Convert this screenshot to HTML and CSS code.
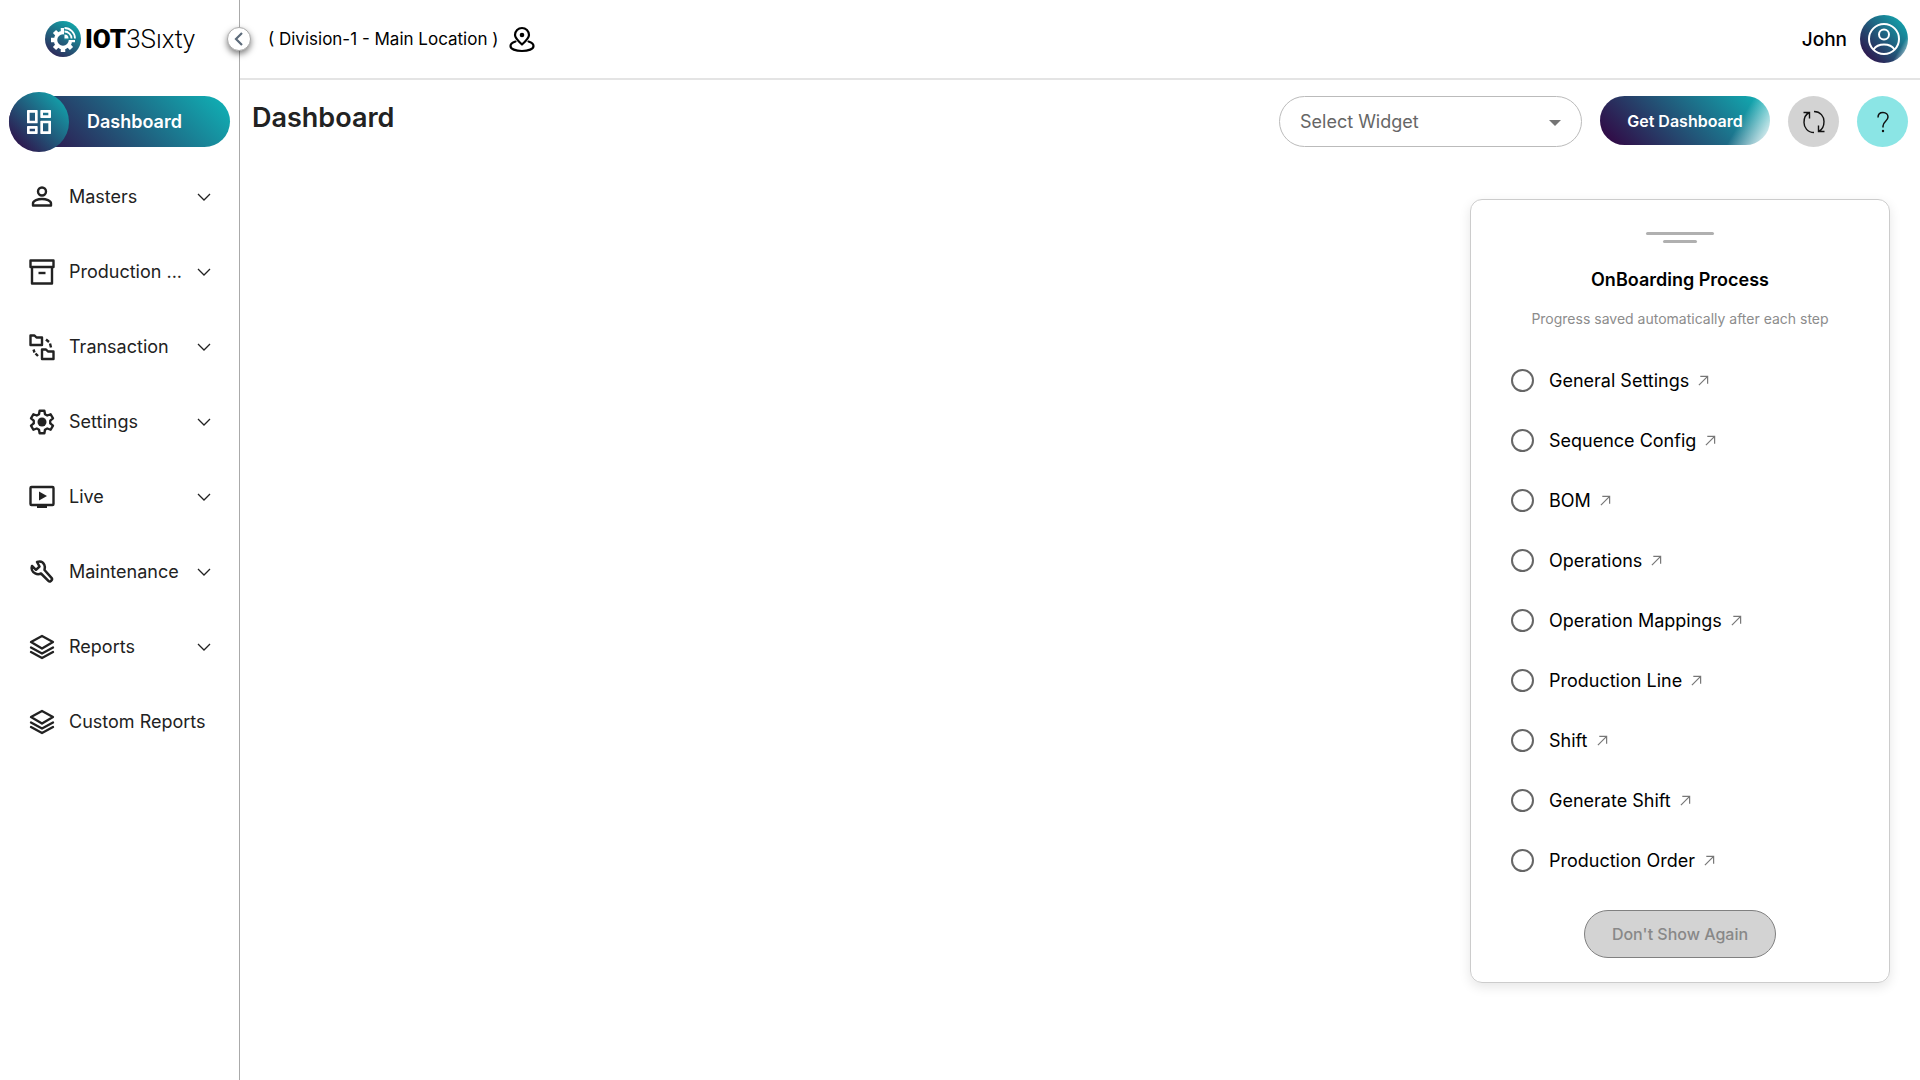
FILE: index.html
```html
<!DOCTYPE html>
<html lang="en">
<head>
    <meta charset="UTF-8">
    <meta name="viewport" content="width=device-width, initial-scale=1.0">
    <title>IOT3Sixty - Dashboard</title>
    <link rel="stylesheet" href="styles.css">
</head>
<body>
    <!-- Shared icons -->
    <svg class="sprite" aria-hidden="true">
        <symbol id="chevron" viewBox="0 0 14 14"><path d="M1 4l6 6 6-6" fill="none" stroke="#222" stroke-width="1.3"/></symbol>
        <symbol id="arrow" viewBox="0 0 12 12"><path d="M1 11L10.500 1.500M2.500 1.500h8v8" fill="none" stroke="#777" stroke-width="1.300"/></symbol>
        <symbol id="layers" viewBox="0 0 30 30"><g fill="none" stroke="#222" stroke-width="2.300" stroke-linejoin="round" stroke-linecap="round"><path d="M15 4l11 6-11 6.500L4 10z"/><path d="M4 15.500L15 21.500l11-6M4 20L15 26l11-6"/></g></symbol>
    </svg>

    <!-- Sidebar -->
    <aside class="sidebar">
        <div class="logo">
            <svg width="36" height="36" viewBox="0 0 36 36">
                <defs><linearGradient id="logoBg" x1="0" y1="1" x2="0.6" y2="0"><stop offset="0" stop-color="#33174f"/><stop offset="1" stop-color="#14a0a5"/></linearGradient></defs>
                <circle cx="18" cy="18" r="18" fill="url(#logoBg)"/>
                <circle cx="18" cy="19" r="7.500" fill="none" stroke="#fff" stroke-width="3.500"/>
                <g stroke="#fff" stroke-width="4.500">
                    <path d="M18 11V7M18 27v4M10 19H6M26 19h4M12.300 13.300L9.500 10.500M12.300 24.700L9.500 27.500M23.700 24.700L26.500 27.500"/>
                </g>
                <path d="M19 19V5a13 13 0 0 1 12 14z" fill="#1b8291"/>
                <path d="M19.500 17.500v-4a4 4 0 0 1 4 4z" fill="#fff"/>
                <path d="M19.500 10.500a7 7 0 0 1 7 7M19.500 7a10.500 10.500 0 0 1 10.500 10.500" fill="none" stroke="#fff" stroke-width="1.800"/>
            </svg>
            <span class="logo-text"><b>IOT</b>3Sıxty</span>
        </div>
        <button class="collapse" aria-label="Collapse menu">
            <svg width="12" height="14" viewBox="0 0 12 14"><path d="M9 1L3 7l6 6" fill="none" stroke="#5c6b7a" stroke-width="2.200"/></svg>
        </button>

        <nav>
            <a href="#" class="item active">
                <span class="pill">
                    <span class="bubble">
                        <svg width="32" height="32" viewBox="0 0 24 24" fill="#fff"><path fill-rule="evenodd" d="M3.500 3h7a.5.5 0 0 1 .5.5v9a.5.5 0 0 1-.5.5h-7a.5.5 0 0 1-.5-.5v-9a.5.5 0 0 1 .5-.5zM5 5v6h4V5zM13.500 3h7a.5.5 0 0 1 .5.5v5a.5.5 0 0 1-.5.5h-7a.5.5 0 0 1-.5-.5v-5a.5.5 0 0 1 .5-.5zM15 5v2h4V5zM13.500 11h7a.5.5 0 0 1 .5.5v9a.5.5 0 0 1-.5.5h-7a.5.5 0 0 1-.5-.5v-9a.5.5 0 0 1 .5-.5zM15 13v6h4v-6zM3.500 15h7a.5.5 0 0 1 .5.5v5a.5.5 0 0 1-.5.5h-7a.5.5 0 0 1-.5-.5v-5a.5.5 0 0 1 .5-.5zM5 17v2h4v-2z"/></svg>
                    </span>
                    <span>Dashboard</span>
                </span>
            </a>
            <a href="#" class="item">
                <svg class="icon" viewBox="0 0 30 30"><g fill="none" stroke="#222" stroke-width="2.400" stroke-linejoin="round"><circle cx="15" cy="9.500" r="4"/><path d="M6 23.500v-2c0-3 5-4.500 9-4.500s9 1.500 9 4.500v2z"/></g></svg>
                <span class="label">Masters</span>
                <svg class="chev"><use href="#chevron"/></svg>
            </a>
            <a href="#" class="item">
                <svg class="icon" viewBox="0 0 30 30"><g fill="none" stroke="#222" stroke-width="2.400" stroke-linejoin="round"><path d="M3.500 3.500h23v6.500h-23zM5 10v16.500h20V10"/><path d="M11.500 16h7"/></g></svg>
                <span class="label">Production ...</span>
                <svg class="chev"><use href="#chevron"/></svg>
            </a>
            <a href="#" class="item">
                <svg class="icon" viewBox="0 0 30 30"><g fill="none" stroke="#222" stroke-width="2.400" stroke-linejoin="round"><path d="M3.500 3.500h4l2 2H15v7.500H3.500zM15 17.500h4l2 2h5.500v7.500H15z"/><path d="M19 7.500l3 2.500M23 11.500l1 4M6.500 17.500l1 3M8.500 21.500l2.500 2.500"/></g></svg>
                <span class="label">Transaction</span>
                <svg class="chev"><use href="#chevron"/></svg>
            </a>
            <a href="#" class="item">
                <svg class="icon" viewBox="0 0 24 24"><path fill="none" stroke="#222" stroke-width="1.900" stroke-linejoin="round" d="M10.100 3h3.800l.5 2.800 1.800 1 2.700-1 1.900 3.300-2.200 1.800v2.200l2.200 1.800-1.900 3.300-2.700-1-1.800 1-.5 2.800h-3.800l-.5-2.800-1.800-1-2.700 1-1.900-3.300 2.200-1.800v-2.200L3.200 9.100l1.900-3.300 2.700 1 1.800-1z"/><circle cx="12" cy="12" r="3.600" fill="#222"/></svg>
                <span class="label">Settings</span>
                <svg class="chev"><use href="#chevron"/></svg>
            </a>
            <a href="#" class="item">
                <svg class="icon" viewBox="0 0 30 30"><rect x="3.500" y="5" width="23" height="18" rx="1" fill="none" stroke="#222" stroke-width="2.400"/><path d="M10 23h10v3H10zM12 9.500l8 4.500-8 4.500z" fill="#222"/></svg>
                <span class="label">Live</span>
                <svg class="chev"><use href="#chevron"/></svg>
            </a>
            <a href="#" class="item">
                <svg class="icon" viewBox="0 0 30 30"><path fill="none" stroke="#222" stroke-width="2.500" stroke-linejoin="round" d="M10 5c3-1 6 0 7.300 2.700 1 2 .7 3.800.2 5.300l7 7.800c.8 1 .8 1.700 0 2.500l-.7.7c-.8.700-1.700.6-2.400-.1L14 16.500c-1.700.8-3.800 1-5.800-.1C5 14.800 4 11.500 5 9l4 3.800 3.500-3.300z"/></svg>
                <span class="label">Maintenance</span>
                <svg class="chev"><use href="#chevron"/></svg>
            </a>
            <a href="#" class="item">
                <svg class="icon"><use href="#layers"/></svg>
                <span class="label">Reports</span>
                <svg class="chev"><use href="#chevron"/></svg>
            </a>
            <a href="#" class="item">
                <svg class="icon"><use href="#layers"/></svg>
                <span class="label">Custom Reports</span>
            </a>
        </nav>
    </aside>

    <div class="page">
        <header>
            <span class="location">( Division-1 - Main Location )</span>
            <svg width="28" height="28" viewBox="0 0 28 28"><g fill="none" stroke="#000" stroke-width="2.200" stroke-linejoin="round" stroke-linecap="round"><path d="M14 19.500C9.500 15.500 7 13 7 10a7 7 0 0 1 14 0c0 3-2.500 5.500-7 9.500z"/><path d="M7.500 16.500C4 17.500 2.500 19 2.500 21c0 3 5 5 11.500 5s11.500-2 11.500-5c0-2-1.500-3.500-5-4.500"/></g><circle cx="14" cy="10" r="2.300"/></svg>
            <div class="user">
                <span>John</span>
                <button class="avatar" aria-label="Account">
                    <svg width="34" height="34" viewBox="0 0 34 34"><g fill="none" stroke="#fff" stroke-width="2"><circle cx="17" cy="17" r="15"/><circle cx="17" cy="12.500" r="5"/><path d="M6.500 27.500c2-3 6-5 10.500-5s8.500 2 10.500 5"/></g></svg>
                </button>
            </div>
        </header>

        <main>
            <div class="toolbar">
                <h1>Dashboard</h1>
                <div class="select">
                    <select aria-label="Select Widget">
                        <option>Select Widget</option>
                    </select>
                    <svg width="12" height="6" viewBox="0 0 12 6"><path d="M0 0h12L6 6z" fill="#757575"/></svg>
                </div>
                <button class="get">Get Dashboard</button>
                <button class="round refresh" aria-label="Refresh">
                    <svg width="26" height="26" viewBox="0 0 26 26" fill="none" stroke="#111" stroke-width="1.400"><path d="M13 23.500C6.500 23.500 3 18.500 3 13.500 3 9 5 5 8.500 3.500M2.500 3.500h6v6M13 2.500C19.500 2.500 23 7.500 23 12.500c0 4.500-2 8.500-5.500 10M23.500 22.500h-6v-6"/></svg>
                </button>
                <button class="round help" aria-label="Help">
                    <svg width="14" height="22" viewBox="0 0 14 22"><path d="M2 6.500C2 3.500 4 1.500 7 1.500s5 2 5 4.500c0 4-5 4.500-5 9v1.500" fill="none" stroke="#111" stroke-width="1.500"/><circle cx="7" cy="20" r="1.200" fill="#111"/></svg>
                </button>
            </div>

            <!-- Onboarding card -->
            <section class="card">
                <div class="handle"></div>
                <div class="handle short"></div>
                <h2>OnBoarding Process</h2>
                <p>Progress saved automatically after each step</p>
                <ul>
                    <li><label><input type="checkbox">General Settings</label><a href="#" aria-label="Open General Settings"><svg><use href="#arrow"/></svg></a></li>
                    <li><label><input type="checkbox">Sequence Config</label><a href="#" aria-label="Open Sequence Config"><svg><use href="#arrow"/></svg></a></li>
                    <li><label><input type="checkbox">BOM</label><a href="#" aria-label="Open BOM"><svg><use href="#arrow"/></svg></a></li>
                    <li><label><input type="checkbox">Operations</label><a href="#" aria-label="Open Operations"><svg><use href="#arrow"/></svg></a></li>
                    <li><label><input type="checkbox">Operation Mappings</label><a href="#" aria-label="Open Operation Mappings"><svg><use href="#arrow"/></svg></a></li>
                    <li><label><input type="checkbox">Production Line</label><a href="#" aria-label="Open Production Line"><svg><use href="#arrow"/></svg></a></li>
                    <li><label><input type="checkbox">Shift</label><a href="#" aria-label="Open Shift"><svg><use href="#arrow"/></svg></a></li>
                    <li><label><input type="checkbox">Generate Shift</label><a href="#" aria-label="Open Generate Shift"><svg><use href="#arrow"/></svg></a></li>
                    <li><label><input type="checkbox">Production Order</label><a href="#" aria-label="Open Production Order"><svg><use href="#arrow"/></svg></a></li>
                </ul>
                <button class="dismiss" disabled>Don't Show Again</button>
            </section>
        </main>
    </div>
</body>
</html>
```

FILE: styles.css
```css
* {
    box-sizing: border-box;
}

body {
    display: flex;
    min-height: 100vh;
    margin: 0;
    font-family: Inter, "Liberation Sans", sans-serif;
    font-size: 18px;
    color: #222;
    background: #fff;
}

button, select {
    font-family: inherit;
    cursor: pointer;
}

.sprite {
    display: none;
}

/* Sidebar */
.sidebar {
    position: relative;
    flex: none;
    width: 240px;
    border-right: 1px solid #aaa;
}

.logo {
    display: flex;
    align-items: center;
    gap: 4px;
    height: 84px;
    padding: 0 0 6px 45px;
}

.logo-text {
    font-family: Roboto, sans-serif;
    font-size: 26px;
    font-weight: 300;
    color: #000;
}

.logo-text b {
    font-weight: 900;
}

.collapse {
    position: absolute;
    top: 27px;
    right: -12px;
    display: flex;
    align-items: center;
    justify-content: center;
    width: 24px;
    height: 24px;
    padding: 0;
    border: 1px solid #aaa;
    border-radius: 50%;
    background: #fff;
    box-shadow: 0 3px 6px rgba(0, 0, 0, 0.5);
}

.item {
    display: flex;
    align-items: center;
    height: 75px;
    padding: 0 28px 0 27px;
    color: #222;
    text-decoration: none;
}

.icon {
    flex: none;
    width: 30px;
    height: 30px;
    margin-right: 12px;
}

.label {
    white-space: nowrap;
}

.chev {
    flex: none;
    width: 14px;
    height: 14px;
    margin-left: auto;
}

.item.active {
    padding: 0 9px;
    color: #fff;
    font-weight: 600;
}

.pill {
    display: flex;
    flex: 1;
    align-items: center;
    gap: 18px;
    height: 51px;
    border-radius: 26px;
    background: linear-gradient(45deg, #33003f, #0fb5b8);
}

.bubble {
    display: flex;
    align-items: center;
    justify-content: center;
    width: 60px;
    height: 60px;
    border-radius: 50%;
    background: linear-gradient(45deg, #33003f, #0fb5b8);
}

/* Top bar */
.page {
    flex: 1;
    min-width: 0;
}

header {
    display: flex;
    align-items: center;
    gap: 10px;
    height: 80px;
    padding: 0 12px 0 28px;
    border-bottom: 2px solid #e4e4e4;
    color: #000;
}

.location {
    font-size: 17px;
}

.user {
    display: flex;
    align-items: center;
    gap: 13px;
    margin-left: auto;
    font-size: 19px;
    font-weight: 500;
}

.avatar {
    display: flex;
    align-items: center;
    justify-content: center;
    width: 48px;
    height: 48px;
    padding: 0;
    border: none;
    border-radius: 50%;
    background: linear-gradient(120deg, transparent 78%, #fff), linear-gradient(45deg, #33003f, #0fb5b8);
}

/* Dashboard toolbar */
main {
    padding: 16px 12px;
}

.toolbar {
    display: flex;
    align-items: flex-start;
    gap: 18px;
}

h1 {
    margin: 6px auto 0 0;
    font-size: 27px;
    line-height: 32px;
    font-weight: 600;
}

.select {
    position: relative;
    width: 303px;
}

.select select {
    width: 100%;
    height: 51px;
    padding: 0 20px;
    border: 1px solid #bbb;
    border-radius: 26px;
    appearance: none;
    background: #fff;
    font-size: 18px;
    color: #666;
}

.select svg {
    position: absolute;
    top: 24px;
    right: 21px;
    pointer-events: none;
}

.get {
    width: 170px;
    height: 49px;
    padding: 0;
    border: none;
    border-radius: 25px;
    background: linear-gradient(120deg, transparent 78%, #fff), linear-gradient(45deg, #33003f, #0fb5b8);
    font-size: 16px;
    font-weight: 600;
    color: #fff;
}

.round {
    display: flex;
    align-items: center;
    justify-content: center;
    width: 51px;
    height: 51px;
    padding: 0;
    border: none;
    border-radius: 50%;
}

.refresh {
    background: #d3d3d3;
}

.help {
    background: #8be5e5;
}

/* Onboarding card */
.card {
    display: flex;
    flex-direction: column;
    align-items: center;
    width: 420px;
    margin: 52px 18px 0 auto;
    padding: 32px 40px 24px;
    border: 1px solid #ccc;
    border-radius: 12px;
    box-shadow: 0 4px 12px rgba(0, 0, 0, 0.1);
    color: #000;
}

.handle {
    width: 68px;
    height: 3px;
    margin-bottom: 5px;
    border-radius: 2px;
    background: #b0b0b0;
}

.handle.short {
    width: 34px;
}

.card h2 {
    margin: 20px 0 0;
    font-size: 18px;
    line-height: 24px;
    font-weight: 600;
}

.card p {
    margin: 17px 0 0;
    font-size: 14px;
    line-height: 20px;
    color: #8c8c8c;
}

.card ul {
    align-self: stretch;
    margin: 21px 0 20px;
    padding: 0;
    list-style: none;
}

.card li, .card label, .card li a {
    display: flex;
    align-items: center;
}

.card li {
    gap: 9px;
    height: 60px;
}

.card input {
    width: 23px;
    height: 23px;
    margin: 0 15px 0 0;
    border: 2px solid #666;
    border-radius: 50%;
    appearance: none;
}

.card input:checked {
    background: #0fb5b8;
}

.card li svg {
    width: 11px;
    height: 11px;
}

.dismiss {
    width: 192px;
    height: 48px;
    padding: 0;
    border: 1px solid #808080;
    border-radius: 24px;
    background: #d3d3d3;
    font-size: 16px;
    font-weight: 500;
    color: #888;
}
```
